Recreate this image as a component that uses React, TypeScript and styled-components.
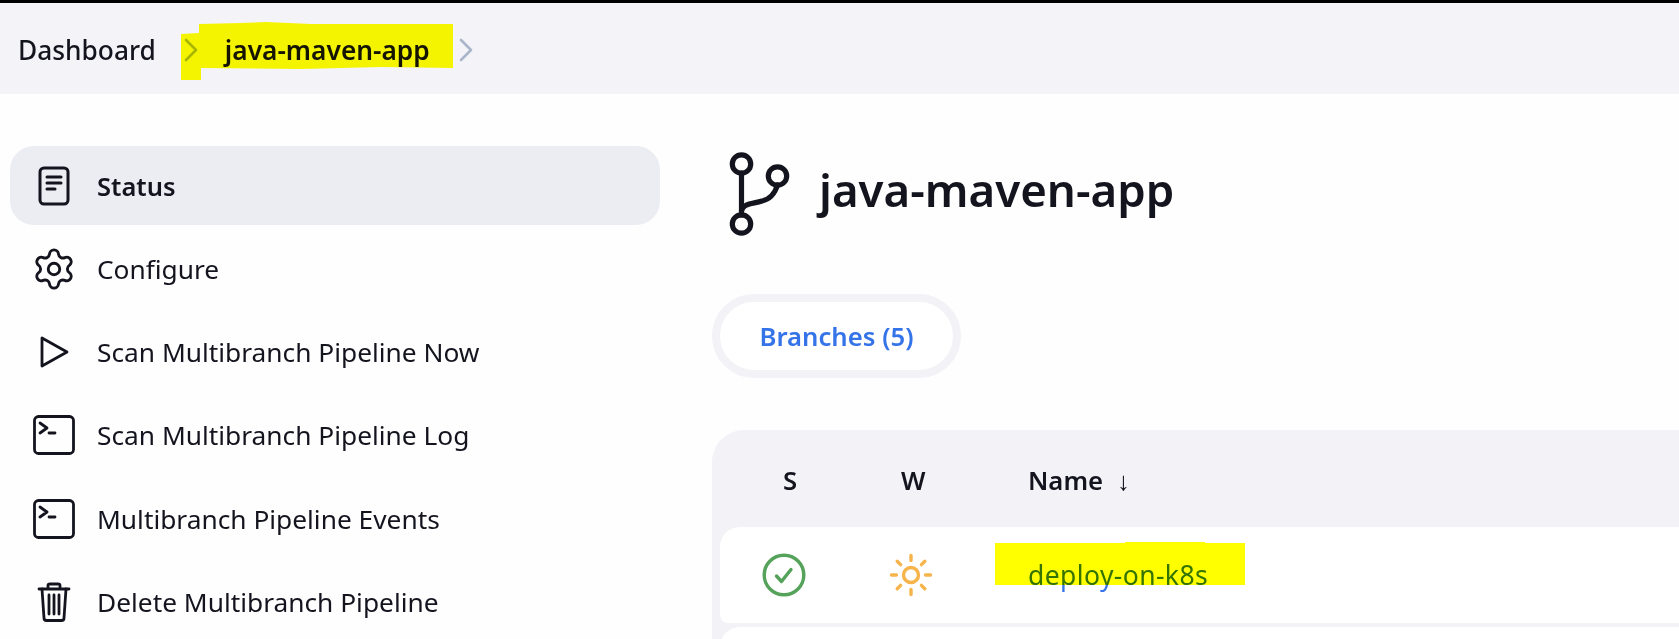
import styled, { createGlobalStyle } from "styled-components";
import { Settings } from "lucide-react";

const GlobalStyle = createGlobalStyle`
  html, body {
    margin: 0;
    height: 100%;
    overflow: hidden;
    background: #fefefe;
  }
  body {
    font-family: "Noto Sans", "Open Sans", sans-serif;
    color: #14141f;
  }
  * {
    box-sizing: border-box;
  }
`;

const ink = "#14141f";

const DocIcon = () => (
  <svg width="32" height="40" viewBox="0 0 32 40" fill="none" stroke={ink} strokeWidth="3" strokeLinecap="round">
    <rect x="2" y="2" width="28" height="36" rx="4" />
    <path d="M9 11h14M9 17h14M9 23h8" />
  </svg>
);

const PlayIcon = () => (
  <svg width="32" height="34" viewBox="0 0 32 34" fill="none" stroke={ink} strokeWidth="2.8" strokeLinejoin="round">
    <path d="M4 3v28l25-14z" />
  </svg>
);

const TerminalIcon = () => (
  <svg width="42" height="40" viewBox="0 0 42 40" fill="none" stroke={ink} strokeWidth="2.8" strokeLinecap="round" strokeLinejoin="round">
    <rect x="1.5" y="1.5" width="39" height="37" rx="4" />
    <path d="M7 8l7 5-7 5M16 18h6" />
  </svg>
);

const TrashIcon = () => (
  <svg width="34" height="40" viewBox="0 0 34 40" fill="none" stroke={ink} strokeWidth="2.8" strokeLinecap="round" strokeLinejoin="round">
    <path d="M2 7h30M11 7V3.5C11 2.5 12 2 13 2h8c1 0 2 .5 2 1.500V7" />
    <path d="M5 7l2 29c0 1.500 1 2.500 2.500 2.500h15c1.500 0 2.500-1 2.500-2.500l2-29" />
    <path d="M12 13v19M17 13v19M22 13v19" />
  </svg>
);

const BranchIcon = () => (
  <svg width="62" height="86" viewBox="0 0 62 86" fill="none" stroke={ink} strokeWidth="5.200" strokeLinecap="round">
    <circle cx="12.500" cy="13" r="9.200" />
    <circle cx="48.500" cy="25" r="9.200" />
    <circle cx="12.500" cy="73" r="9.200" />
    <path d="M12.500 22v42" />
    <path d="M12.500 60C14 52 24 53 33 50C42 48 46 42 48.500 34" />
  </svg>
);

const SuccessIcon = () => (
  <svg width="44" height="44" viewBox="0 0 44 44" fill="none" stroke="#55a25a" strokeWidth="3.400" strokeLinecap="round" strokeLinejoin="round">
    <circle cx="22" cy="22" r="19.800" />
    <path d="M14.500 23l5 5.500 9.500-12" />
  </svg>
);

const SunIcon = () => (
  <svg width="44" height="44" viewBox="0 0 44 44" fill="none" stroke="#f6b44b" strokeWidth="3.400" strokeLinecap="round">
    <circle cx="22" cy="22" r="7.500" />
    <path d="M22 2.500v5M22 36.500v5M2.500 22h5M36.500 22h5M8.200 8.200l3.400 3.400M32.400 32.400l3.400 3.400M8.200 35.800l3.400-3.400M32.400 11.600l3.400-3.400" />
  </svg>
);

const Chevron = () => (
  <ChevronMark width="14" height="24" viewBox="0 0 14 24" fill="none" stroke="#a9b6c9" strokeWidth="2.600" strokeLinecap="round" strokeLinejoin="round">
    <path d="M2 2l10 10L2 22" />
  </ChevronMark>
);

const sideItems = [
  { label: "Status", icon: <DocIcon />, active: true },
  { label: "Configure", icon: <Settings size={46} color={ink} strokeWidth={1.5} /> },
  { label: "Scan Multibranch Pipeline Now", icon: <PlayIcon /> },
  { label: "Scan Multibranch Pipeline Log", icon: <TerminalIcon /> },
  { label: "Multibranch Pipeline Events", icon: <TerminalIcon /> },
  { label: "Delete Multibranch Pipeline", icon: <TrashIcon /> },
];

export default function App() {
  return (
    <Page>
      <GlobalStyle />
      <TopBar>
        <Crumb>Dashboard</Crumb>
        <Chevron />
        <CurrentCrumb>java-maven-app</CurrentCrumb>
        <Chevron />
        <CrumbMarker width="274" height="60" viewBox="0 0 274 60">
          <path d="M18 2L60 1L85 0L130 2L272 2V46L200 45L120 47L20 46V58L0 58V12L18 11Z" fill="#ffff00" />
        </CrumbMarker>
      </TopBar>
      <Content>
        <Sidebar>
          {sideItems.map((item) => (
            <SideItem key={item.label} $active={item.active}>
              <IconSlot>{item.icon}</IconSlot>
              {item.label}
            </SideItem>
          ))}
        </Sidebar>
        <Main>
          <TitleRow>
            <BranchIcon />
            <Title>java-maven-app</Title>
          </TitleRow>
          <Tab>Branches (5)</Tab>
          <Table>
            <HeadRow>
              <HeadCell $width={118}>S</HeadCell>
              <HeadCell $width={147}>W</HeadCell>
              <NameHead>
                Name <SortArrow>↓</SortArrow>
              </NameHead>
            </HeadRow>
            <BodyRow>
              <IconCell $width={128}>
                <SuccessIcon />
              </IconCell>
              <IconCell $width={125}>
                <SunIcon />
              </IconCell>
              <JobLink>
                deploy-on-k8s
                <JobMarker />
              </JobLink>
            </BodyRow>
            <BodyRow />
          </Table>
        </Main>
      </Content>
    </Page>
  );
}

const Page = styled.div`
  height: 639px;
  overflow: hidden;
`;

const TopBar = styled.header`
  position: relative;
  display: flex;
  align-items: center;
  height: 94px;
  padding: 2px 0 0 18px;
  border-top: 3px solid #000;
  background: #f4f4f8;
  font-size: 26.3px;
`;

const Crumb = styled.span`
  font-weight: 500;
  margin-right: 28px;
`;

const CurrentCrumb = styled.span`
  font-weight: 600;
  margin: 0 29px 0 27px;
`;

const ChevronMark = styled.svg`
  flex: none;
`;

const CrumbMarker = styled.svg`
  position: absolute;
  left: 181px;
  top: 19px;
  mix-blend-mode: multiply;
`;

const Content = styled.div`
  display: flex;
`;

const Sidebar = styled.nav`
  flex: none;
  width: 660px;
  padding: 52px 0 0 10px;
`;

const SideItem = styled.div<{ $active?: boolean }>`
  display: flex;
  align-items: center;
  height: 79px;
  margin-bottom: 4.300px;
  border-radius: 24px;
  background: ${(props) => (props.$active ? "#ecedf2" : "transparent")};
  font-size: ${(props) => (props.$active ? 25.5 : 26.3)}px;
  font-weight: ${(props) => (props.$active ? 600 : 400)};
`;

const IconSlot = styled.span`
  display: flex;
  align-items: center;
  justify-content: center;
  width: 87px;
  padding-left: 1px;
  flex: none;
`;

const Main = styled.main`
  flex: 1;
  min-width: 0;
  padding: 57px 0 0 52px;
`;

const TitleRow = styled.div`
  display: flex;
  align-items: center;
  gap: 28px;
  height: 86px;
  padding-left: 17px;
`;

const Title = styled.h1`
  margin: 0 0 10px;
  font-size: 45.600px;
  font-weight: 600;
`;

const Tab = styled.div`
  display: flex;
  align-items: center;
  justify-content: center;
  width: 249px;
  height: 84px;
  margin-top: 57px;
  border: 8px solid #f2f2f7;
  border-radius: 42px;
  background: #fff;
  color: #3574e8;
  font-size: 25.700px;
  font-weight: 600;
`;

const Table = styled.section`
  margin-top: 52px;
  padding: 0 0 0 8px;
  border-radius: 32px 0 0 0;
  background: #f2f2f7;
`;

const HeadRow = styled.div`
  display: flex;
  align-items: center;
  height: 97px;
  padding-top: 3px;
  font-size: 25.700px;
  font-weight: 600;
`;

const HeadCell = styled.div<{ $width: number }>`
  width: ${(props) => props.$width}px;
  flex: none;
  padding-left: 63px;
`;

const NameHead = styled.div`
  display: flex;
  align-items: center;
  margin-left: 43px;
`;

const SortArrow = styled.span`
  margin-left: 14px;
  font-weight: 400;
`;

const BodyRow = styled.div`
  display: flex;
  align-items: center;
  height: 96px;
  margin-bottom: 4px;
  border-radius: 20px 0 0 8px;
  background: #fff;
`;

const IconCell = styled.div<{ $width: number }>`
  display: flex;
  justify-content: center;
  flex: none;
  width: ${(props) => props.$width}px;
`;

const JobLink = styled.a`
  position: relative;
  margin-left: 55px;
  color: #3574e8;
  font-size: 26.500px;
  letter-spacing: 0.4px;
`;

const JobMarker = styled.span`
  position: absolute;
  left: -33px;
  top: -15px;
  width: 250px;
  height: 43px;
  background: #ffff00;
  mix-blend-mode: multiply;
  clip-path: polygon(0 1px, 52% 1px, 52% 0, 84% 0, 84% 1px, 100% 1px, 100% 100%, 0 100%);
`;
